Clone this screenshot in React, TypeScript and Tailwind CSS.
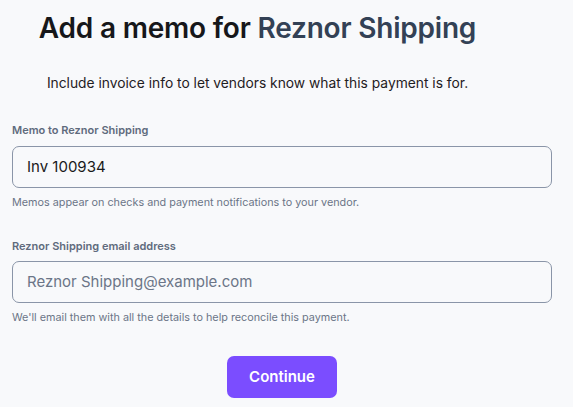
export default function App() {
  const font = { fontFamily: 'Inter, "Open Sans", sans-serif' };

  return (
    <div className="min-h-[407px] w-full bg-[#f8f9fb] text-[#1a1a1a]" style={font}>
      <div className="ml-3 flex w-[540px] flex-col pt-[10px]">
        {/* Header */}
        <div className="w-[491px]">
          <h1 className="text-center text-[28px] font-semibold leading-[36px] tracking-[-0.2px] text-[#16171a]">
            Add a memo for <span className="text-[#334155]">Reznor Shipping</span>
          </h1>
          <p className="mt-[27px] text-center text-[13.8px] leading-[20px] text-[#1f2023]">
            Include invoice info to let vendors know what this payment is for.
          </p>
        </div>

        {/* Memo field */}
        <label className="mt-[30px] text-[11px] font-semibold leading-[14px] text-[#5f6b7d]">
          Memo to Reznor Shipping
        </label>
        <div className="mt-[9px] flex h-[42px] items-center rounded-[7px] border border-[#8a95a8] px-[14px] text-[15px] text-[#1a1a1a]">
          Inv 100934
        </div>
        <p className="mt-[8px] text-[10.8px] leading-[14px] text-[#6b7587]">
          Memos appear on checks and payment notifications to your vendor.
        </p>

        {/* Email field */}
        <label className="mt-[29px] text-[11px] font-semibold leading-[14px] text-[#5f6b7d]">
          Reznor Shipping email address
        </label>
        <div className="mt-[8px] flex h-[42px] items-center rounded-[7px] border border-[#8a95a8] px-[14px] text-[15px] text-[#6b7587]">
          Reznor Shipping@example.com
        </div>
        <p className="mt-[8px] text-[10.8px] leading-[14px] text-[#6b7587]">
          We'll email them with all the details to help reconcile this payment.
        </p>

        <div className="mt-[31px] flex justify-center">
          <button className="h-[42px] w-[110px] rounded-[7px] bg-[#7b4dff] text-[15px] font-semibold text-white">
            Continue
          </button>
        </div>
      </div>
    </div>
  );
}
